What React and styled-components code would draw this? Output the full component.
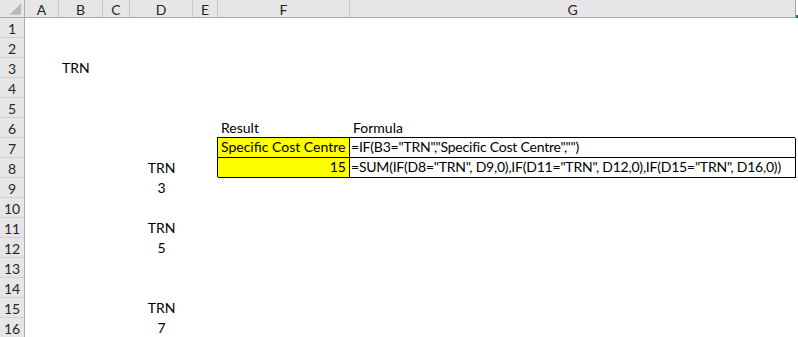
import React from 'react';
import styled, { createGlobalStyle } from 'styled-components';

const GlobalStyle = createGlobalStyle`
  html, body {
    margin: 0;
    padding: 0;
    background: #ffffff;
  }
  body {
    font-family: Lato, "Liberation Sans", sans-serif;
    overflow: hidden;
  }
`;

const COLUMNS = [
  { name: 'A', width: 34 },
  { name: 'B', width: 44 },
  { name: 'C', width: 27 },
  { name: 'D', width: 63 },
  { name: 'E', width: 25 },
  { name: 'F', width: 132 },
  { name: 'G', width: 446 },
];

const ROW_COUNT = 16;

// cell contents keyed by address
const CELLS = {
  B3: { text: 'TRN' },
  D8: { text: 'TRN', align: 'center' },
  D9: { text: '3', align: 'center' },
  D11: { text: 'TRN', align: 'center' },
  D12: { text: '5', align: 'center' },
  D15: { text: 'TRN', align: 'center' },
  D16: { text: '7', align: 'center' },
  F6: { text: 'Result' },
  G6: { text: 'Formula' },
  F7: { text: 'Specific Cost Centre', fill: '#ffff00', boxed: true },
  G7: { text: '=IF(B3="TRN","Specific Cost Centre","")', boxed: true, formula: true },
  F8: { text: '15', align: 'right', fill: '#ffff00', boxed: true },
  G8: {
    text: '=SUM(IF(D8="TRN", D9,0),IF(D11="TRN", D12,0),IF(D15="TRN", D16,0))',
    boxed: true,
    formula: true,
  },
};

export default function App() {
  const rows = Array.from({ length: ROW_COUNT }, (_, i) => i + 1);
  return (
    <>
      <GlobalStyle />
      <Sheet $columns={COLUMNS.map(c => c.width + 'px').join(' ')}>
        <Corner>
          <svg width="25" height="17" viewBox="0 0 25 17">
            <polygon points="22,3 22,15 10,15" fill="#b9b9b9" />
          </svg>
        </Corner>
        {COLUMNS.map(col => (
          <ColumnHeader key={col.name}>{col.name}</ColumnHeader>
        ))}
        <HeaderTail />

        {rows.map(row => (
          <React.Fragment key={row}>
            <RowHeader>{row}</RowHeader>
            {COLUMNS.map(col => {
              const cell = CELLS[col.name + row] || {};
              return (
                <Cell
                  key={col.name}
                  $align={cell.align}
                  $fill={cell.fill}
                  $boxed={cell.boxed}
                >
                  {cell.text && <CellText $formula={cell.formula}>{cell.text}</CellText>}
                </Cell>
              );
            })}
            <Cell />
          </React.Fragment>
        ))}
      </Sheet>
    </>
  );
}

const Sheet = styled.div`
  display: grid;
  grid-template-columns: 25px ${({ $columns }) => $columns} 1fr;
  grid-template-rows: 18px;
  grid-auto-rows: 20px;
  width: 798px;
  height: 337px;
  overflow: hidden;
  background: #ffffff;
  color: #000000;
  font-size: 14px;
`;

const HeaderBase = styled.div`
  box-sizing: border-box;
  background: #e6e6e6;
  color: #262626;
  font-size: 14px;
  display: flex;
  align-items: center;
  justify-content: center;
`;

const Corner = styled(HeaderBase)`
  border-right: 1px solid #ababab;
  border-bottom: 1px solid #ababab;
  svg {
    display: block;
  }
`;

const ColumnHeader = styled(HeaderBase)`
  border-right: 1px solid #c9c9c9;
  border-bottom: 1px solid #ababab;
  padding-top: 1px;

  &:nth-child(8) {
    border-right-color: #a3a3a3;
  }
`;

const HeaderTail = styled.div`
  background: linear-gradient(to bottom, #ffffff 0 15px, #217346 15px 18px);
`;

const RowHeader = styled(HeaderBase)`
  border-right: 1px solid #ababab;
  border-bottom: 1px solid #d0d0d0;
  padding-top: 1px;
`;

const Cell = styled.div`
  box-sizing: border-box;
  display: flex;
  align-items: flex-end;
  justify-content: ${({ $align }) =>
    $align === 'center' ? 'center' : $align === 'right' ? 'flex-end' : 'flex-start'};
  padding: 0 3px 1px;
  white-space: nowrap;
  overflow: visible;
  background: ${({ $fill }) => $fill || 'transparent'};
  ${({ $boxed }) =>
    $boxed &&
    `
    border-right: 1px solid #000;
    border-bottom: 1px solid #000;
    box-shadow: -1px -1px 0 0 #000;
  `}
`;

const CellText = styled.span`
  line-height: 18px;
  letter-spacing: ${({ $formula }) => ($formula ? '-0.22px' : 'normal')};
  margin-left: ${({ $formula }) => ($formula ? '-2px' : '0')};
`;
